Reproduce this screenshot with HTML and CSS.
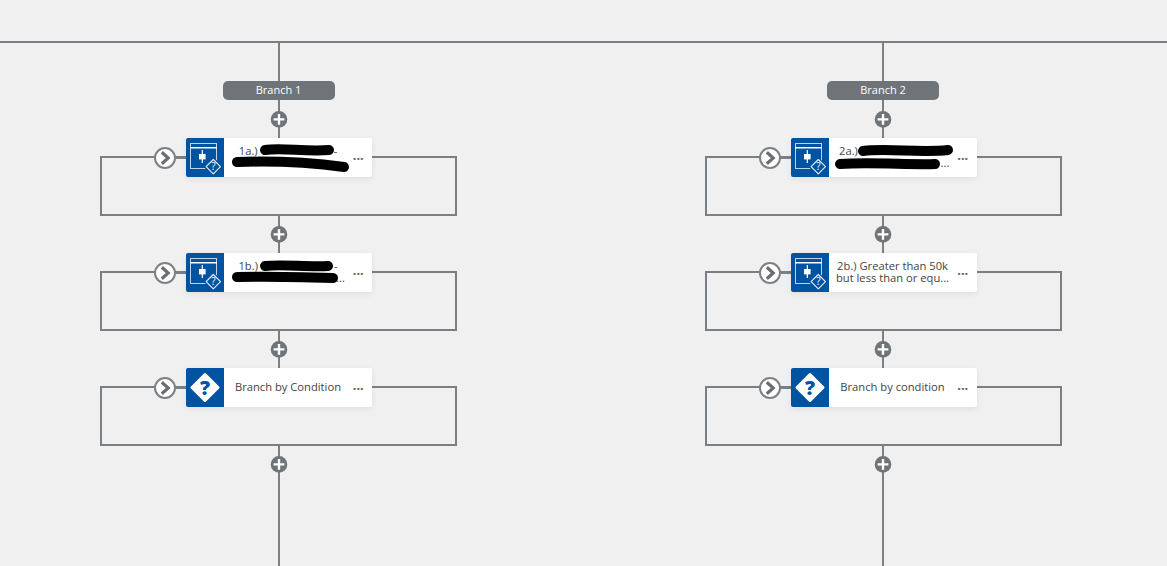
FILE: index.html
```html
<!DOCTYPE html>
<html lang="en">
<head>
<meta charset="utf-8">
<title>Workflow branches</title>
<link rel="stylesheet" href="styles.css">
</head>
<body>
<svg class="defs" width="0" height="0" aria-hidden="true">
  <defs>
    <symbol id="chevron" viewBox="0 0 22 22">
      <circle cx="11" cy="11" r="10" fill="#fff" stroke="#7d8185" stroke-width="2"/>
      <path d="M7.8 5.2 L14.2 11 L7.8 16.8" fill="none" stroke="#6a6e72" stroke-width="3.2"/>
    </symbol>
    <symbol id="plus" viewBox="0 0 18 18">
      <circle cx="9" cy="9.4" r="8.3" fill="#6f7479"/>
      <path d="M9 4V14.8M3.6 9.4H14.4" stroke="#fff" stroke-width="2.4"/>
    </symbol>
    <symbol id="decision" viewBox="0 0 38 39">
      <rect x="4.5" y="5.5" width="26" height="25" fill="none" stroke="#bcd3ea" stroke-width="1"/>
      <path d="M4 9.7H31" stroke="#fff" stroke-width="1.5"/>
      <path d="M16.3 12V25" stroke="#fff" stroke-width="1.2"/>
      <rect x="13" y="16" width="6.6" height="5.4" fill="#fff"/>
      <path d="M27.3 21 L35 28.7 L27.3 36.4 L19.6 28.7 Z" fill="#0053a0" stroke="#0053a0" stroke-width="3"/>
      <path d="M27.3 21.5 L34.5 28.7 L27.3 35.9 L20.1 28.7 Z" fill="#0053a0" stroke="#e8f0f8" stroke-width="1.1" stroke-linejoin="round"/>
      <text x="27.3" y="32" text-anchor="middle" class="icon-q">?</text>
    </symbol>
    <symbol id="condition" viewBox="0 0 38 39">
      <path d="M19 6.5 L32 19.5 L19 32.5 L6 19.5 Z" fill="#fff" stroke="#fff" stroke-width="3" stroke-linejoin="round"/>
      <text x="19" y="26.6" text-anchor="middle" class="icon-q-big">?</text>
    </symbol>
  </defs>
</svg>

<main class="canvas">
  <div class="branches">

    <section class="branch">
      <div class="pill">Branch 1</div>
      <svg class="plus"><use href="#plus"/></svg>

      <div class="step">
        <div class="loop"></div>
        <div class="row">
          <svg class="chev"><use href="#chevron"/></svg>
          <span class="stub"></span>
          <div class="card">
            <svg class="icon"><use href="#decision"/></svg>
            <div class="label"><span class="gap-a">1a.)</span>-<br><span class="gap-b"></span></div>
            <div class="more">&middot;&middot;&middot;</div>
            <svg class="scribble" viewBox="0 0 186 39"><path class="ink" d="M79 12 C95 9 118 14 143 12"/><path class="ink" d="M51 24 C80 23 120 24 158 29"/></svg>
          </div>
        </div>
        <svg class="plus plus-low"><use href="#plus"/></svg>
      </div>

      <div class="step">
        <div class="loop"></div>
        <div class="row">
          <svg class="chev"><use href="#chevron"/></svg>
          <span class="stub"></span>
          <div class="card">
            <svg class="icon"><use href="#decision"/></svg>
            <div class="label"><span class="gap-a">1b.)</span>-<br><span class="gap-b"></span>...</div>
            <div class="more">&middot;&middot;&middot;</div>
            <svg class="scribble" viewBox="0 0 186 39"><path class="ink" d="M79 13 C95 11 120 14 142 13"/><path class="ink" d="M51 24 C80 23 115 24 147 25"/></svg>
          </div>
        </div>
        <svg class="plus plus-low"><use href="#plus"/></svg>
      </div>

      <div class="step">
        <div class="loop"></div>
        <div class="row">
          <svg class="chev"><use href="#chevron"/></svg>
          <span class="stub"></span>
          <div class="card">
            <svg class="icon"><use href="#condition"/></svg>
            <div class="label">Branch by Condition</div>
            <div class="more">&middot;&middot;&middot;</div>
          </div>
        </div>
        <svg class="plus plus-low"><use href="#plus"/></svg>
      </div>
    </section>

    <section class="branch">
      <div class="pill">Branch 2</div>
      <svg class="plus"><use href="#plus"/></svg>

      <div class="step">
        <div class="loop"></div>
        <div class="row">
          <svg class="chev"><use href="#chevron"/></svg>
          <span class="stub"></span>
          <div class="card">
            <svg class="icon"><use href="#decision"/></svg>
            <div class="label"><span class="gap-c">2a.)</span><br><span class="gap-b"></span>...</div>
            <div class="more">&middot;&middot;&middot;</div>
            <svg class="scribble" viewBox="0 0 186 39"><path class="ink" d="M72 13 C95 10 130 15 157 12"/><path class="ink" d="M49 26 C80 24 120 27 144 26"/></svg>
          </div>
        </div>
        <svg class="plus plus-low"><use href="#plus"/></svg>
      </div>

      <div class="step">
        <div class="loop"></div>
        <div class="row">
          <svg class="chev"><use href="#chevron"/></svg>
          <span class="stub"></span>
          <div class="card">
            <svg class="icon"><use href="#decision"/></svg>
            <div class="label">2b.) Greater than 50k<br>but less than or equ...</div>
            <div class="more">&middot;&middot;&middot;</div>
          </div>
        </div>
        <svg class="plus plus-low"><use href="#plus"/></svg>
      </div>

      <div class="step">
        <div class="loop"></div>
        <div class="row">
          <svg class="chev"><use href="#chevron"/></svg>
          <span class="stub"></span>
          <div class="card">
            <svg class="icon"><use href="#condition"/></svg>
            <div class="label">Branch by condition</div>
            <div class="more">&middot;&middot;&middot;</div>
          </div>
        </div>
        <svg class="plus plus-low"><use href="#plus"/></svg>
      </div>
    </section>

  </div>
</main>
</body>
</html>
```
FILE: styles.css
```css
* { box-sizing: border-box; }

html, body {
  margin: 0;
  height: 100%;
  overflow: hidden;
  background: #f0f0f0;
}

.defs { position: absolute; }

.icon-q {
  font: 400 10px "Open Sans", sans-serif;
  fill: #fff;
}

.icon-q-big {
  font: 800 20px "Open Sans", sans-serif;
  fill: #0053a0;
}

.canvas {
  height: 566px;
  padding-top: 41px;
  font-family: "Open Sans", "Noto Sans", sans-serif;
}

.branches {
  display: flex;
  gap: 247.5px;
  height: 525px;
  padding-left: 100px;
  border-top: 2px solid #7b7f83;
}

.branch {
  position: relative;
  width: 357px;
  height: 523px;
  display: flex;
  flex-direction: column;
  align-items: center;
  padding-top: 38px;
}

.branch::before {
  content: "";
  position: absolute;
  top: 0;
  bottom: 0;
  left: 177.5px;
  width: 2px;
  background: #7b7f83;
}

.pill {
  position: relative;
  width: 112px;
  height: 19px;
  line-height: 18px;
  border-radius: 5px;
  background: #6f7479;
  color: #fff;
  font-size: 11px;
  font-weight: 500;
  text-align: center;
}

.plus {
  position: relative;
  display: block;
  flex: none;
  width: 18px;
  height: 18px;
  margin: 10px 0;
}

.step {
  position: relative;
  width: 357px;
  display: flex;
  flex-direction: column;
  align-items: center;
}

.loop {
  position: absolute;
  top: 18px;
  left: 0;
  width: 357px;
  height: 60px;
  border: 2px solid #7b7f83;
  background: #f0f0f0;
}

.row {
  position: relative;
  align-self: flex-start;
  display: flex;
  align-items: center;
  margin-left: 54px;
  height: 39px;
}

.chev {
  flex: none;
  width: 22px;
  height: 22px;
}

.stub {
  flex: none;
  width: 10px;
  height: 2px;
  background: #7b7f83;
}

.card {
  position: relative;
  display: flex;
  align-items: center;
  width: 186px;
  height: 39px;
  border-radius: 2px;
  background: #fff;
  box-shadow: 0 2px 6px rgba(0, 0, 0, 0.07);
  overflow: hidden;
}

.icon {
  flex: none;
  width: 38px;
  height: 39px;
  background: #0053a0;
}

.label {
  flex: 1;
  min-width: 0;
  padding: 0 0 2px 4px;
  font-size: 11.2px;
  line-height: 12px;
  color: #444;
  text-align: center;
  white-space: nowrap;
}

.gap-a { margin-right: 76px; }

.gap-c { margin-right: 88px; }

.gap-b {
  display: inline-block;
  width: 105px;
  height: 1px;
}

.more {
  flex: none;
  width: 20px;
  margin-right: 4px;
  font-size: 15px;
  font-weight: 600;
  line-height: 12px;
  letter-spacing: -0.5px;
  color: #666;
  text-align: center;
}

.scribble {
  position: absolute;
  top: 0;
  left: 0;
  width: 186px;
  height: 39px;
}

.ink {
  fill: none;
  stroke: #000;
  stroke-width: 10;
  stroke-linecap: round;
}

.plus-low { margin: 48px 0 10px; }
```
